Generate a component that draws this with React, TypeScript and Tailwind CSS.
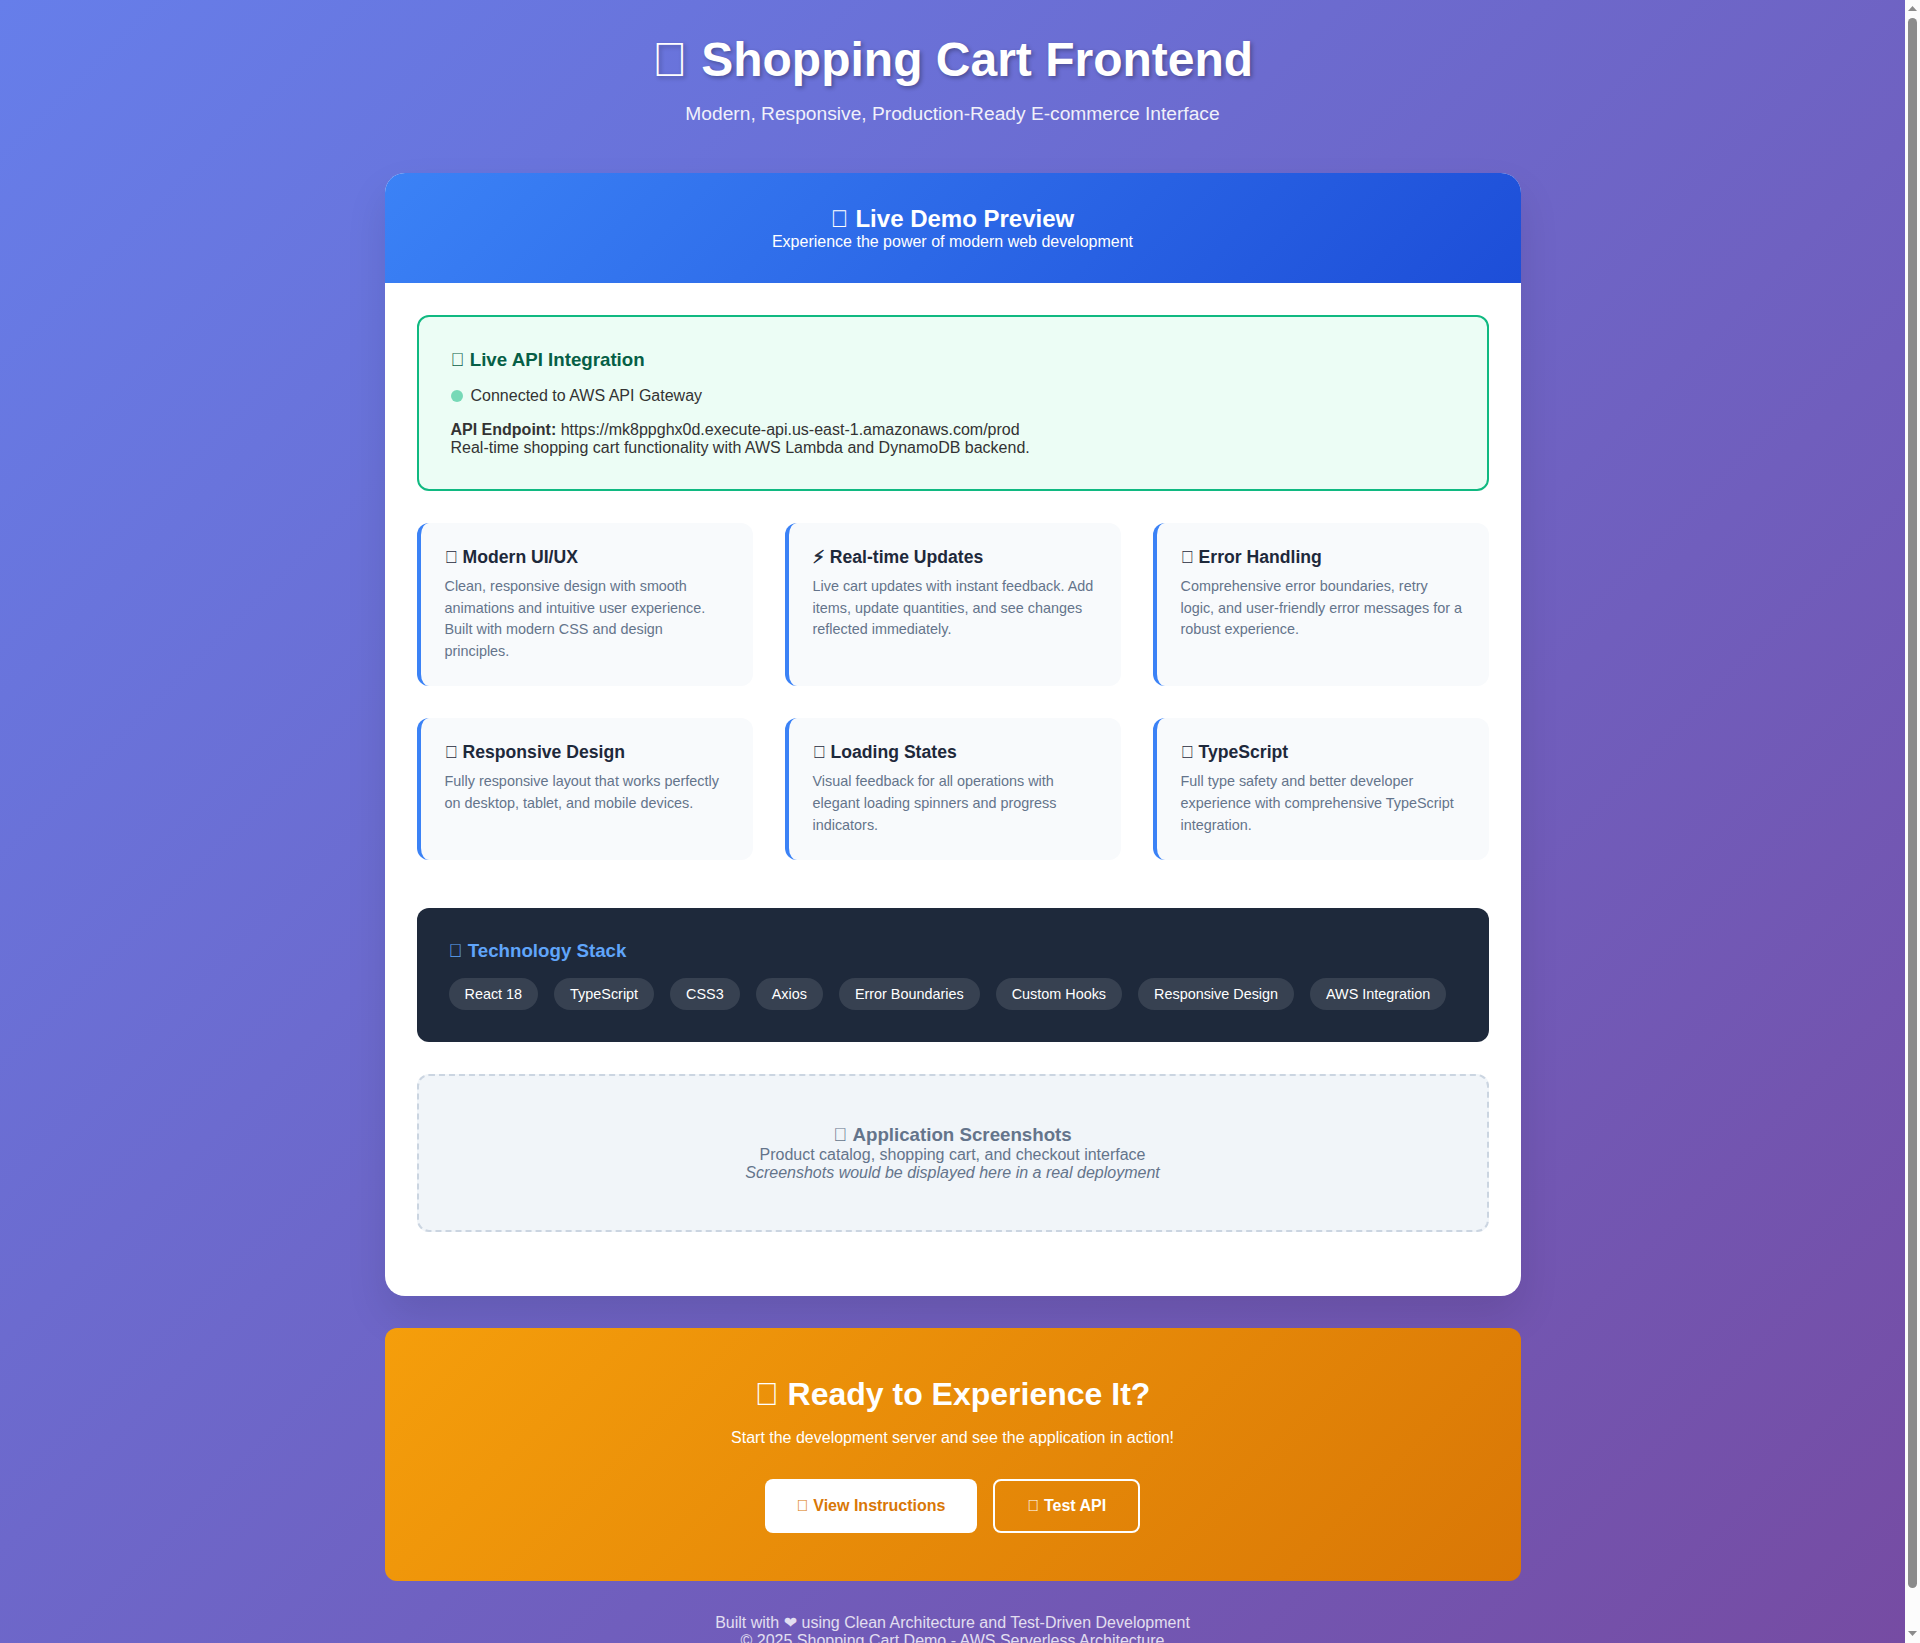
import type { ReactNode } from 'react';

// Placeholder glyph drawn by the text font for symbols it does not carry.
const BOX = '\u{F0000}';

const features: { icon: ReactNode; title: string; text: string }[] = [
  {
    icon: BOX,
    title: 'Modern UI/UX',
    text: 'Clean, responsive design with smooth animations and intuitive user experience. Built with modern CSS and design principles.',
  },
  {
    icon: <span className="[-webkit-text-stroke:0.7px_#1e293b]">⚡</span>,
    title: 'Real-time Updates',
    text: 'Live cart updates with instant feedback. Add items, update quantities, and see changes reflected immediately.',
  },
  {
    icon: BOX,
    title: 'Error Handling',
    text: 'Comprehensive error boundaries, retry logic, and user-friendly error messages for a robust experience.',
  },
  {
    icon: BOX,
    title: 'Responsive Design',
    text: 'Fully responsive layout that works perfectly on desktop, tablet, and mobile devices.',
  },
  {
    icon: BOX,
    title: 'Loading States',
    text: 'Visual feedback for all operations with elegant loading spinners and progress indicators.',
  },
  {
    icon: BOX,
    title: 'TypeScript',
    text: 'Full type safety and better developer experience with comprehensive TypeScript integration.',
  },
];

const stack = [
  'React 18',
  'TypeScript',
  'CSS3',
  'Axios',
  'Error Boundaries',
  'Custom Hooks',
  'Responsive Design',
  'AWS Integration',
];

function Scrollbar() {
  return (
    <div className="flex h-full w-[15px] shrink-0 flex-col items-center justify-between bg-[#fcfcfc]">
      <svg className="mt-[6px] h-[5px] w-[9px] shrink-0" viewBox="0 0 9 5" fill="#8b8b8b">
        <path d="M4.5 0 L9 5 H0 Z" />
      </svg>
      <div className="mt-[7px] mb-[43px] w-[9px] flex-1 rounded-full bg-[#8b8b8b]" />
      <svg className="mb-[7px] h-[5px] w-[9px] shrink-0" viewBox="0 0 9 5" fill="#8b8b8b">
        <path d="M0 0 H9 L4.5 5 Z" />
      </svg>
    </div>
  );
}

function StatusPanel() {
  return (
    <section className="rounded-xl border-2 border-[#10b981] bg-[#ecfdf5] p-8">
      <h3 className="mb-4 text-[18.72px] leading-[normal] font-bold text-[#065f46]">{BOX} Live API Integration</h3>
      <div className="mb-4 flex items-center gap-2">
        <span className="size-3 rounded-full bg-[#10b981] opacity-[0.53]" />
        <span>Connected to AWS API Gateway</span>
      </div>
      <p>
        <strong className="font-bold">API Endpoint:</strong> https://mk8ppghx0d.execute-api.us-east-1.amazonaws.com/prod
      </p>
      <p>Real-time shopping cart functionality with AWS Lambda and DynamoDB backend.</p>
    </section>
  );
}

function TechStack() {
  return (
    <section className="mt-12 rounded-xl bg-[#1e293b] p-8 text-white">
      <h3 className="mb-4 text-[18.72px] leading-[normal] font-bold text-[#60a5fa]">{BOX} Technology Stack</h3>
      <div className="flex flex-wrap gap-4">
        {stack.map((name) => (
          <span key={name} className="rounded-[20px] bg-[#374151] px-4 py-2 text-[14.4px] leading-[16px]">
            {name}
          </span>
        ))}
      </div>
    </section>
  );
}

export default function App() {
  return (
    <div className="flex h-screen items-start overflow-hidden font-['Liberation_Sans','DejaVu_Sans',sans-serif] text-[16px] leading-[normal] text-[#333]">
      <div className="min-w-0 flex-1 bg-[linear-gradient(135deg,#667eea_0%,#764ba2_100%)]">
        <div className="mx-auto max-w-[1200px] p-8">
          <header className="mb-12 text-center text-white">
            <h1 className="mb-4 text-[48px] leading-[normal] font-bold [text-shadow:2px_2px_4px_rgba(0,0,0,0.3)]">
              {BOX} Shopping Cart Frontend
            </h1>
            <p className="text-[19.2px] leading-[normal] opacity-90">
              Modern, Responsive, Production-Ready E-commerce Interface
            </p>
          </header>

          <main className="mb-8 overflow-hidden rounded-[20px] bg-white shadow-[0_20px_40px_rgba(0,0,0,0.1)]">
            <div className="bg-[linear-gradient(135deg,#3b82f6,#1d4ed8)] p-8 text-center text-white">
              <h2 className="text-[24px] leading-[normal] font-bold">{BOX} Live Demo Preview</h2>
              <p>Experience the power of modern web development</p>
            </div>
            <div className="p-8">
              <StatusPanel />
              <div className="mt-8 grid grid-cols-3 gap-8">
                {features.map((f) => (
                  <article key={f.title} className="rounded-xl border-l-4 border-[#3b82f6] bg-[#f8fafc] p-6">
                    <h4 className="mb-2 text-[17.6px] leading-[normal] font-bold text-[#1e293b]">
                      {f.icon} {f.title}
                    </h4>
                    <p className="text-[14.4px] leading-[1.5] text-[#64748b]">{f.text}</p>
                  </article>
                ))}
              </div>
              <TechStack />
              <section className="my-8 rounded-xl border-2 border-dashed border-[#cbd5e1] bg-[#f1f5f9] p-12 text-center text-[#64748b]">
                <h3 className="text-[18.72px] leading-[normal] font-bold">{BOX} Application Screenshots</h3>
                <p>Product catalog, shopping cart, and checkout interface</p>
                <p className="italic">Screenshots would be displayed here in a real deployment</p>
              </section>
            </div>
          </main>

          <section className="rounded-xl bg-[linear-gradient(135deg,#f59e0b,#d97706)] p-12 text-center text-white">
            <h2 className="mb-4 text-[32px] leading-[normal] font-bold">{BOX} Ready to Experience It?</h2>
            <p>Start the development server and see the application in action!</p>
            <div className="mt-8 flex justify-center gap-4">
              <button className="rounded-lg bg-white px-8 py-4 font-bold text-[#d97706]">{BOX} View Instructions</button>
              <button className="rounded-lg border-2 border-white px-8 py-4 font-bold text-white">{BOX} Test API</button>
            </div>
          </section>

          <footer className="mt-8 text-center text-white opacity-80">
            <p>Built with ❤ using Clean Architecture and Test-Driven Development</p>
            <p>© 2025 Shopping Cart Demo - AWS Serverless Architecture</p>
          </footer>
        </div>
      </div>
      <Scrollbar />
    </div>
  );
}
